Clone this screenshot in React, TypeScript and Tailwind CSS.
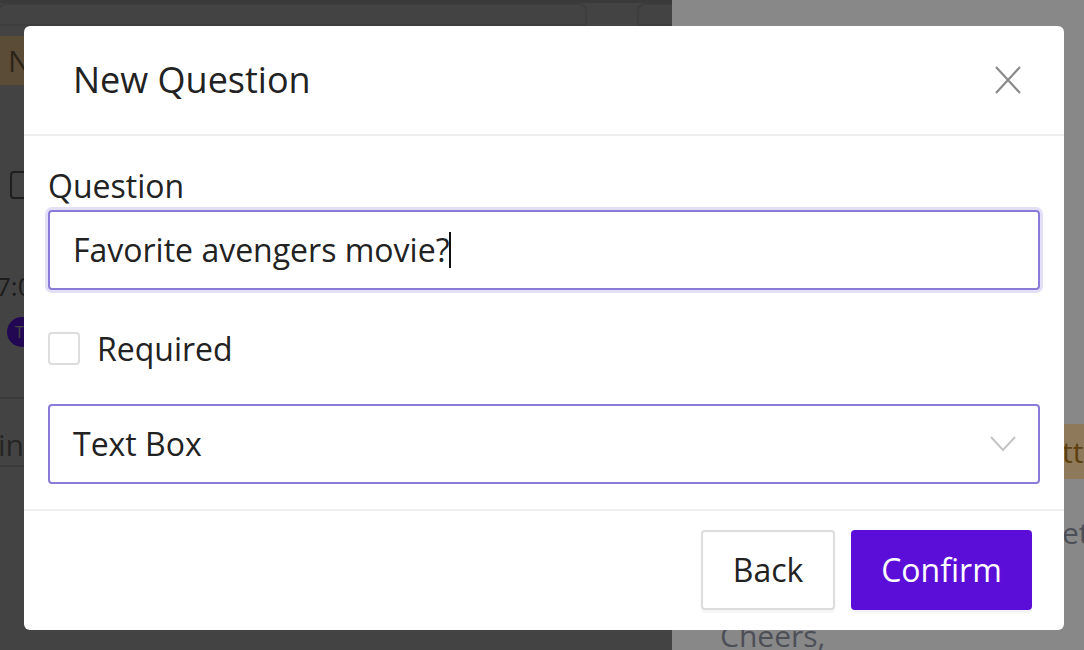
import { useState } from 'react';

export default function App() {
  const [question] = useState('Favorite avengers movie?');
  const [required, setRequired] = useState(false);

  return (
    <div className="w-[1084px] h-[650px] relative overflow-hidden font-['Open_Sans',sans-serif]">
      {/* Page behind the dialog */}
      <div className="flex h-full">
        <div className="w-[672px] shrink-0 h-full bg-[#434343] flex flex-col text-[#222] overflow-hidden">
          <div className="h-[26px] border-t-[3px] border-[#3a3a3a] flex gap-[50px]">
            <div className="w-[589px] h-full border-2 border-[#3d3d3d] rounded-t-[8px] -ml-[2px]" />
            <div className="flex-1 h-full border-2 border-[#3d3d3d] rounded-tl-[8px] border-r-0" />
          </div>
          <div className="mt-[10px] w-[90px] h-[49px] bg-[#5a4c37] text-[30px] leading-[49px] pl-[8px] text-[#2c2418] whitespace-nowrap">New</div>
          <div className="mt-[86px] ml-[10px] w-[20px] h-[28px] border-2 border-[#1e1e1e] rounded-[4px]" />
          <div className="mt-[72px] text-[26px] leading-[30px] -ml-[4px] text-[#1c1c1c] whitespace-nowrap">7:00 PM</div>
          <div className="mt-[16px] ml-[7px] w-[30px] h-[30px] rounded-full bg-[#220852] text-[#444] text-[16px] leading-[30px] pl-[8px]">T</div>
          <div className="mt-[50px] h-[2px] bg-[#3b3b3b]" />
          <div className="mt-[30px] text-[30px] leading-[32px] -ml-[2px] text-[#252525] whitespace-nowrap">inbox</div>
          <div className="mt-[4px] h-[2px] bg-[#3b3b3b]" />
        </div>
        <div className="flex-1 min-w-0 h-full bg-[#888888] flex flex-col overflow-hidden">
          <div className="mt-[424px] ml-[360px] w-[52px] h-[55px] shrink-0 bg-[#8e7a5a] text-[30px] leading-[55px] text-[#5e3f10] whitespace-nowrap pl-[30px]">tt</div>
          <div className="mt-[36px] ml-[390px] text-[30px] leading-[36px] text-[#4d4f57] whitespace-nowrap">et</div>
          <div className="mt-[67px] ml-[48px] text-[30px] leading-[36px] text-[#4d4f57] whitespace-nowrap">Cheers,</div>
        </div>
      </div>

      {/* Dialog */}
      <div className="absolute left-[24px] top-[26px] w-[1040px] h-[604px] bg-white rounded-[6px] flex flex-col text-[#222]">
        <div className="h-[110px] border-b-2 border-[#eeeeee] flex items-center justify-between pl-[49px] pr-[43px] shrink-0">
          <h2 className="text-[36px] leading-[44px] text-[#222]">New Question</h2>
          <button className="w-[26px] h-[28px] flex items-center justify-center">
            <svg width="26" height="28" viewBox="0 0 26 28" fill="none" stroke="#8a8a8a" strokeWidth="2.2">
              <path d="M1 1 L25 27 M25 1 L1 27" />
            </svg>
          </button>
        </div>

        <div className="flex-1 px-[24px] pt-[30px] flex flex-col">
          <label className="text-[32px] leading-[40px] text-[#222]">Question</label>
          <div className="mt-[4px] h-[80px] rounded-[4px] border-2 border-[#8b7bd8] ring-[3px] ring-[#e3dff7] flex items-center pl-[23px] text-[32px] text-[#222]">
            <span>{question}</span>
            <span className="w-[2px] h-[36px] bg-[#111]" />
          </div>

          <div className="mt-[42px] flex items-center gap-[17px] h-[33px]">
            <button
              onClick={() => setRequired(!required)}
              className="w-[32px] h-[33px] rounded-[4px] border-2 border-[#dddddd] bg-white"
            />
            <span className="text-[32px] leading-[40px] text-[#222]">Required</span>
          </div>

          <div className="mt-[39px] h-[80px] rounded-[4px] border-2 border-[#8b7bd8] flex items-center justify-between pl-[23px] pr-[22px] text-[32px] text-[#222]">
            <span>Text Box</span>
            <svg width="26" height="16" viewBox="0 0 26 16" fill="none" stroke="#c4c4c4" strokeWidth="2">
              <path d="M1 1 L13 14 L25 1" />
            </svg>
          </div>
        </div>

        <div className="h-[121px] shrink-0 border-t-2 border-[#eeeeee] flex items-start justify-end gap-[16px] pt-[19px] pr-[32px]">
          <button className="w-[134px] h-[80px] rounded-[4px] border-2 border-[#dddddd] bg-white text-[32px] text-[#222] shadow-[0_3px_2px_rgba(0,0,0,0.04)]">
            Back
          </button>
          <button className="w-[181px] h-[80px] rounded-[4px] bg-[#5b0ed8] text-[32px] text-white shadow-[0_3px_2px_rgba(0,0,0,0.05)]">
            Confirm
          </button>
        </div>
      </div>
    </div>
  );
}
